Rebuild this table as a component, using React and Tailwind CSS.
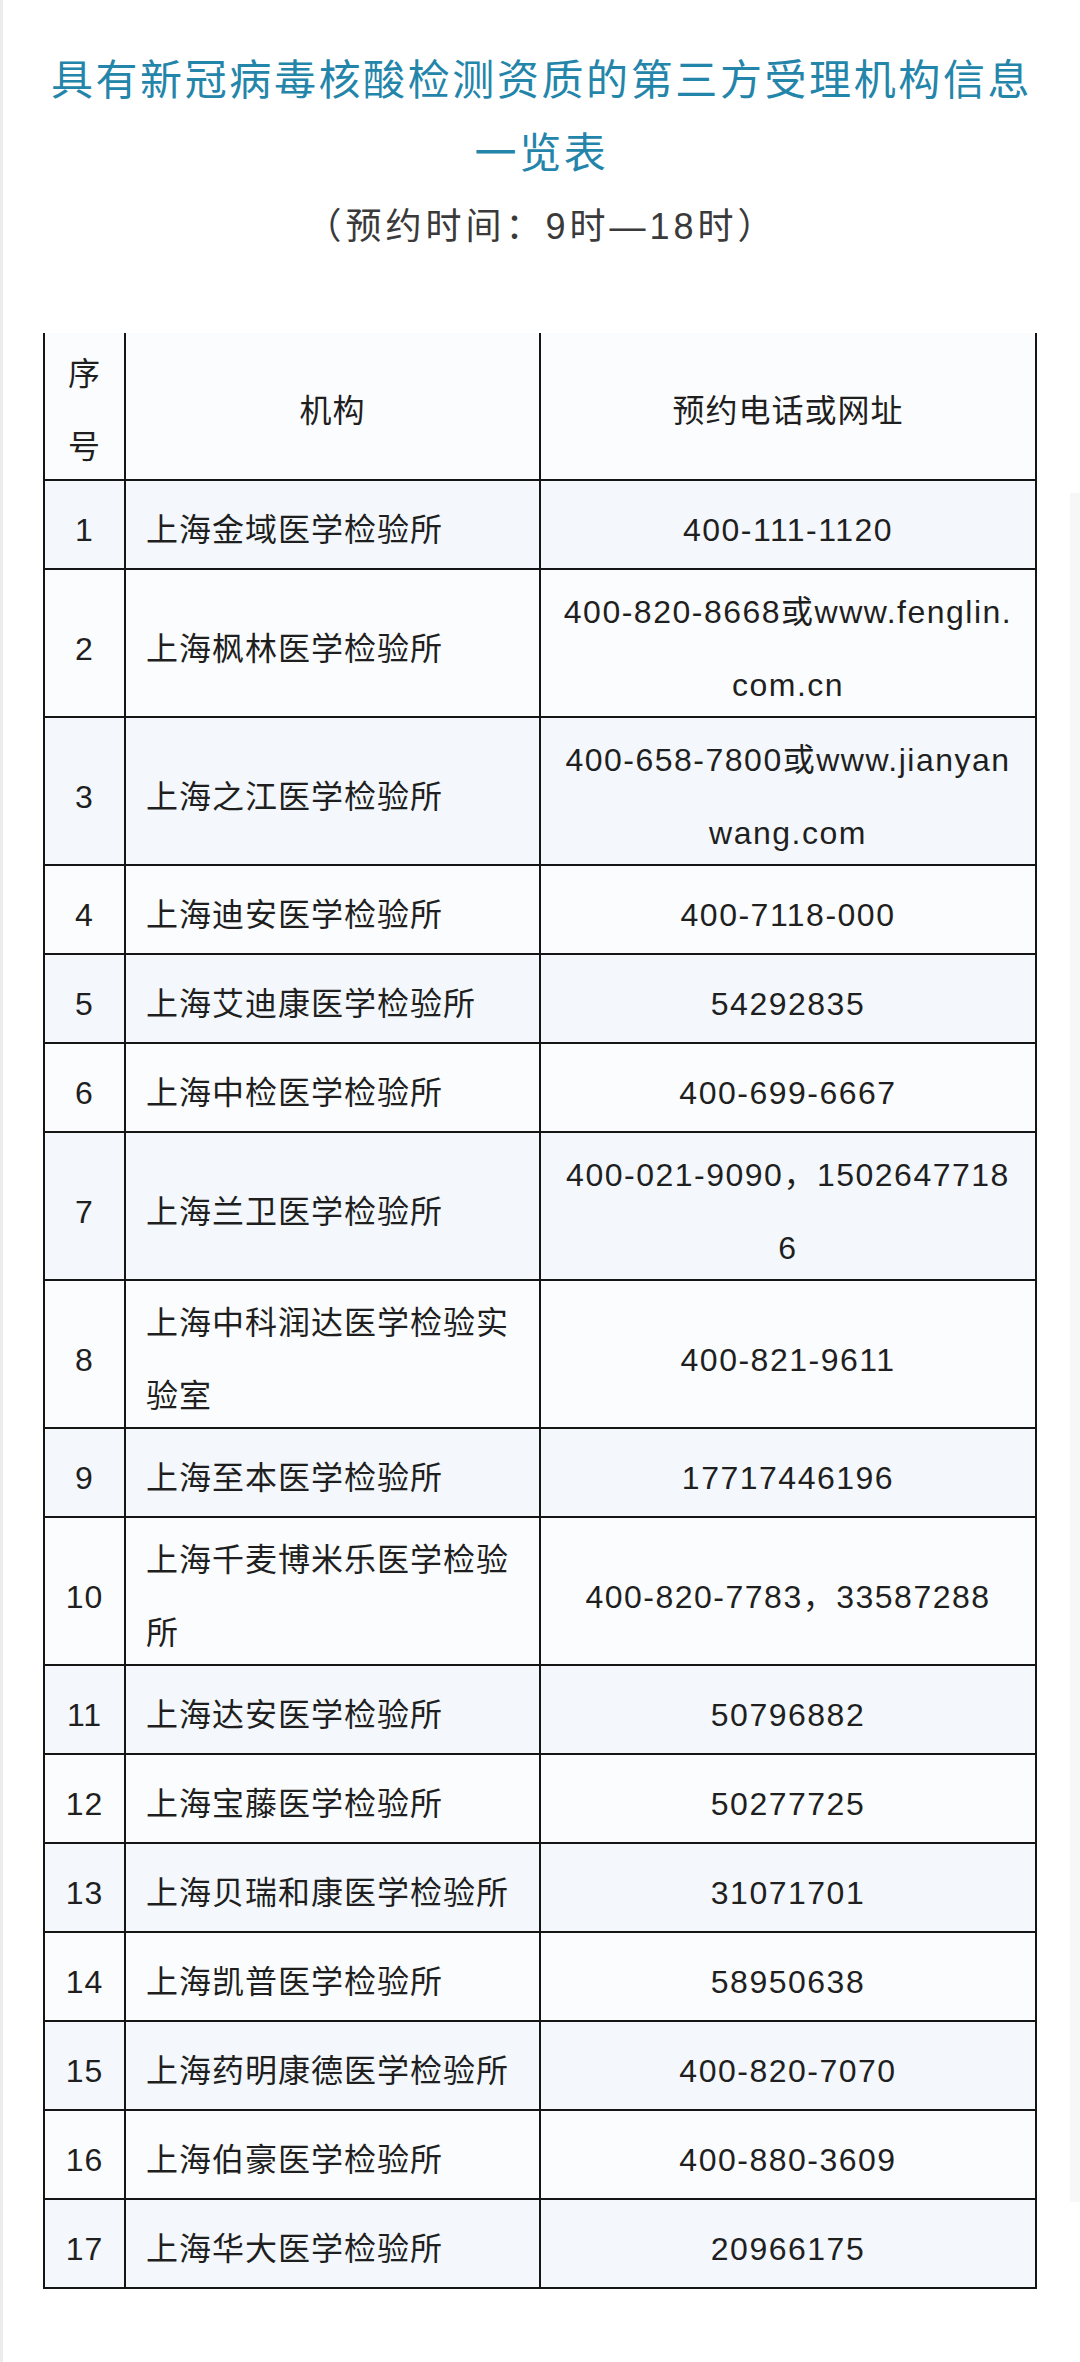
import React from "react";

const rows = [
  ["1", "上海金域医学检验所", "400-111-1120"],
  ["2", "上海枫林医学检验所", "400-820-8668或www.fenglin.com.cn"],
  ["3", "上海之江医学检验所", "400-658-7800或www.jianyanwang.com"],
  ["4", "上海迪安医学检验所", "400-7118-000"],
  ["5", "上海艾迪康医学检验所", "54292835"],
  ["6", "上海中检医学检验所", "400-699-6667"],
  ["7", "上海兰卫医学检验所", "400-021-9090，15026477186"],
  ["8", "上海中科润达医学检验实验室", "400-821-9611"],
  ["9", "上海至本医学检验所", "17717446196"],
  ["10", "上海千麦博米乐医学检验所", "400-820-7783，33587288"],
  ["11", "上海达安医学检验所", "50796882"],
  ["12", "上海宝藤医学检验所", "50277725"],
  ["13", "上海贝瑞和康医学检验所", "31071701"],
  ["14", "上海凯普医学检验所", "58950638"],
  ["15", "上海药明康德医学检验所", "400-820-7070"],
  ["16", "上海伯豪医学检验所", "400-880-3609"],
  ["17", "上海华大医学检验所", "20966175"],
];

export default function App() {
  return (
    <div
      className="relative w-[1080px] min-h-[2362px] bg-white border-l-[3px] border-[#ececec] text-[#1f1f1f]"
      style={{ fontFamily: '"Liberation Sans", "Noto Sans CJK SC", sans-serif' }}
    >
      {/* right scroll track */}
      <div className="absolute right-0 top-[493px] w-[10px] h-[1709px] bg-[#f7f7f7]" />

      <div className="pt-[44px] text-center text-[#2485aa] text-[42px] leading-[73px] tracking-[2.6px] font-normal">
        <div>具有新冠病毒核酸检测资质的第三方受理机构信息</div>
        <div>一览表</div>
      </div>
      <div className="mt-[12px] text-center text-[#3a3a3a] text-[36px] leading-[50px] tracking-[4px]">
        （预约时间：9时—18时）
      </div>

      <div className="mt-[81px] ml-[40px] w-[994px] text-[32px] leading-[73px] tracking-[1px]">
        <div className="grid grid-cols-[83px_415px_496px] min-h-[148px] bg-[#fbfcfd]">
          <div className="border-l-2 border-r-2 border-b-2 border-[#151515] flex items-center justify-center text-center px-[10px]">
            <div className="translate-y-[5px]">序号</div>
          </div>
          <div className="border-r-2 border-b-2 border-[#151515] flex items-center justify-center text-center">
            <div className="translate-y-[5px]">机构</div>
          </div>
          <div className="border-r-2 border-b-2 border-[#151515] flex items-center justify-center text-center">
            <div className="translate-y-[5px]">预约电话或网址</div>
          </div>
        </div>
        {rows.map(([n, name, tel], i) => (
          <div
            key={n}
            className={
              "grid grid-cols-[83px_415px_496px] min-h-[89px] " +
              (i % 2 === 0 ? "bg-[#f4f8fc]" : "bg-[#fbfcfd]")
            }
          >
            <div className="border-l-2 border-r-2 border-b-2 border-[#151515] flex items-center justify-center text-center px-[6px]">
              <div className="translate-y-[6px]">{n}</div>
            </div>
            <div className="border-r-2 border-b-2 border-[#151515] flex items-center pl-[20px] pr-[20px]">
              <div className="break-all translate-y-[6px]">{name}</div>
            </div>
            <div className="border-r-2 border-b-2 border-[#151515] flex items-center justify-center px-[18px]">
              <div className="break-all text-center w-full tracking-[1.5px] translate-y-[6px]">{tel}</div>
            </div>
          </div>
        ))}
      </div>
    </div>
  );
}
